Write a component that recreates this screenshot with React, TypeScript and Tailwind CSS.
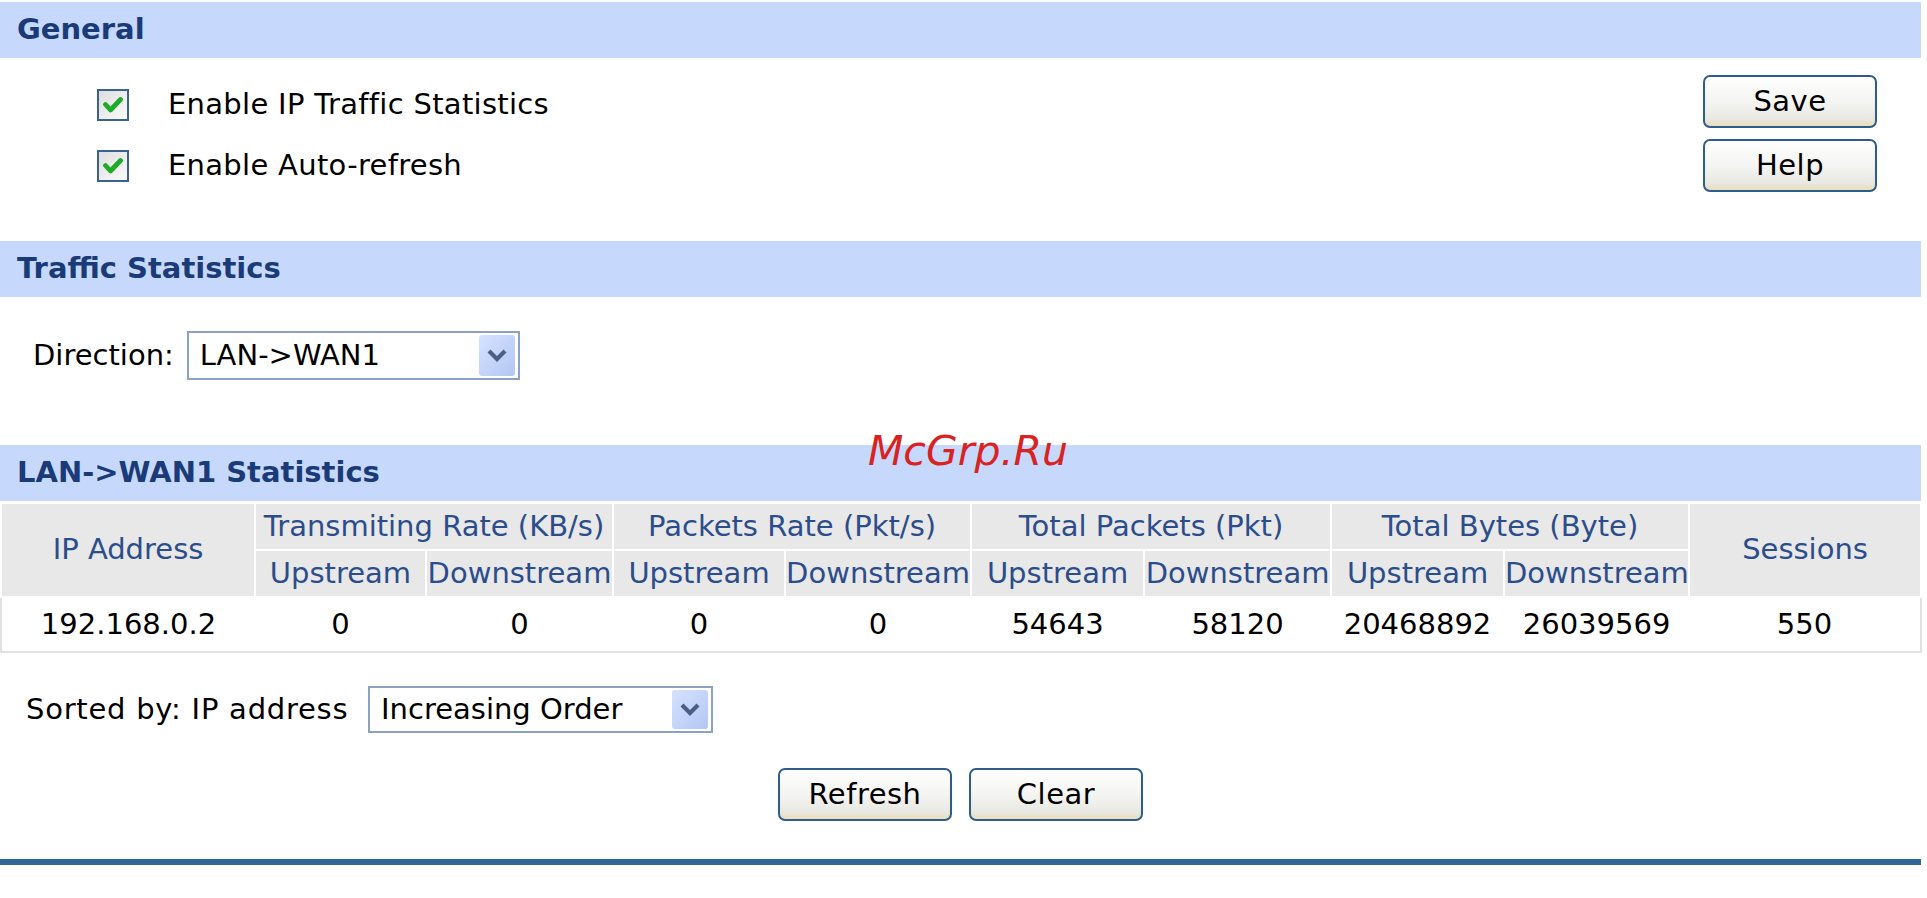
import type { ReactNode } from 'react'

const font = { fontFamily: '"DejaVu Sans", Verdana, sans-serif' }

function SectionHeader({ title }: { title: string }) {
  return (
    <div className="h-[56px] bg-[#c6d9fc] flex items-center pl-[17px] text-[29px] font-bold text-[#1b3b78]">
      {title}
    </div>
  )
}

function Checkbox() {
  return (
    <span className="w-[32px] h-[32px] shrink-0 border-2 border-[#3a6190] bg-gradient-to-br from-[#dedede] to-[#fbfbfb] flex items-center justify-center">
      <svg width="20" height="18" viewBox="0 0 20 18">
        <path d="M2.5 8.5 L7.5 14 L17.5 3.5" fill="none" stroke="#1faa28" strokeWidth="4.8" strokeLinecap="round" strokeLinejoin="round" />
      </svg>
    </span>
  )
}

function XpButton({ children, className = '' }: { children: ReactNode; className?: string }) {
  return (
    <button
      className={`h-[53px] w-[174px] rounded-[7px] border-2 border-[#2e5d8c] bg-gradient-to-b from-[#ffffff] via-[#f4f4f2] to-[#e4e3dc] text-[29px] tracking-[0.5px] text-black shadow-[inset_0_-4px_2px_rgba(236,222,170,0.55)] ${className}`}
    >
      {children}
    </button>
  )
}

function Select({ value, className = '' }: { value: string; className?: string }) {
  return (
    <div className={`border-2 border-[#8aa3c2] bg-white p-[2px] pr-[3px] flex items-stretch ${className}`}>
      <span className="flex-1 flex items-center pl-[9px] text-[29px] text-black">{value}</span>
      <span className="w-[36px] rounded-[3px] bg-gradient-to-br from-[#d6e2fe] to-[#b3c7f4] flex items-center justify-center">
        <svg width="22" height="15" viewBox="0 0 22 15">
          <path d="M3 3 L11 11 L19 3" fill="none" stroke="#4a5f86" strokeWidth="4.2" strokeLinejoin="miter" />
        </svg>
      </span>
    </div>
  )
}

const cols = [254, 171, 187, 172, 186, 173, 187, 173, 185, 232]
const groups = ['Transmiting Rate (KB/s)', 'Packets Rate (Pkt/s)', 'Total Packets (Pkt)', 'Total Bytes (Byte)']
const data = ['192.168.0.2', '0', '0', '0', '0', '54643', '58120', '20468892', '26039569', '550']

const th = 'bg-[#e8e8e8] border-2 border-white p-0 font-normal text-[#2b4d8c] text-center whitespace-nowrap'

export default function App() {
  return (
    <div className="relative w-[1927px] h-[898px] bg-white overflow-hidden text-[29px]" style={font}>
      <div className="w-[1921px] pt-[2px]">
        <SectionHeader title="General" />
        <div className="h-[183px] flex justify-between">
          <div className="pl-[97px] pt-[31px] flex flex-col gap-[29px]">
            <label className="flex items-center gap-[39px] h-[32px] text-black tracking-[0.3px]">
              <Checkbox />
              Enable IP Traffic Statistics
            </label>
            <label className="flex items-center gap-[39px] h-[32px] text-black tracking-[0.3px]">
              <Checkbox />
              Enable Auto-refresh
            </label>
          </div>
          <div className="pr-[44px] pt-[17px] flex flex-col gap-[11px]">
            <XpButton>Save</XpButton>
            <XpButton>Help</XpButton>
          </div>
        </div>

        <SectionHeader title="Traffic Statistics" />
        <div className="h-[148px] pt-[34px] pl-[33px] flex items-start gap-[13px]">
          <span className="h-[49px] flex items-center text-black">Direction:</span>
          <Select value="LAN->WAN1" className="w-[333px] h-[49px]" />
        </div>

        <SectionHeader title="LAN->WAN1 Statistics" />
        <div className="mt-[1px]">
          <table className="w-[1920px] table-fixed border-collapse">
            <colgroup>
              {cols.map((w, i) => (
                <col key={i} style={{ width: w }} />
              ))}
            </colgroup>
            <thead>
              <tr className="h-[47px]">
                <th rowSpan={2} className={th}>IP Address</th>
                {groups.map((g) => (
                  <th key={g} colSpan={2} className={th}>{g}</th>
                ))}
                <th rowSpan={2} className={th}>Sessions</th>
              </tr>
              <tr className="h-[47px]">
                {groups.map((g) => [
                  <th key={g + 'u'} className={th}>Upstream</th>,
                  <th key={g + 'd'} className={th}>Downstream</th>,
                ])}
              </tr>
            </thead>
            <tbody>
              <tr className="h-[55px]">
                {data.map((d, i) => (
                  <td
                    key={i}
                    className={`p-0 text-center text-black border-b-2 border-[#e2e2e2] ${i === 0 ? 'border-l-2' : ''} ${i === data.length - 1 ? 'border-r-2' : ''}`}
                  >
                    {d}
                  </td>
                ))}
              </tr>
            </tbody>
          </table>
        </div>

        <div className="mt-[33px] pl-[26px] flex items-center">
          <span className="w-[342px] text-black tracking-[0.75px]">Sorted by: IP address</span>
          <Select value="Increasing Order" className="w-[345px] h-[47px]" />
        </div>

        <div className="mt-[35px] flex justify-center gap-[17px]">
          <XpButton>Refresh</XpButton>
          <XpButton>Clear</XpButton>
        </div>

        <div className="mt-[38px] h-[6px] bg-[#2f6797]" />
      </div>

      <div className="absolute left-[868px] top-[431px] text-[41px] leading-none italic text-[#d92323]">McGrp.Ru</div>
    </div>
  )
}
